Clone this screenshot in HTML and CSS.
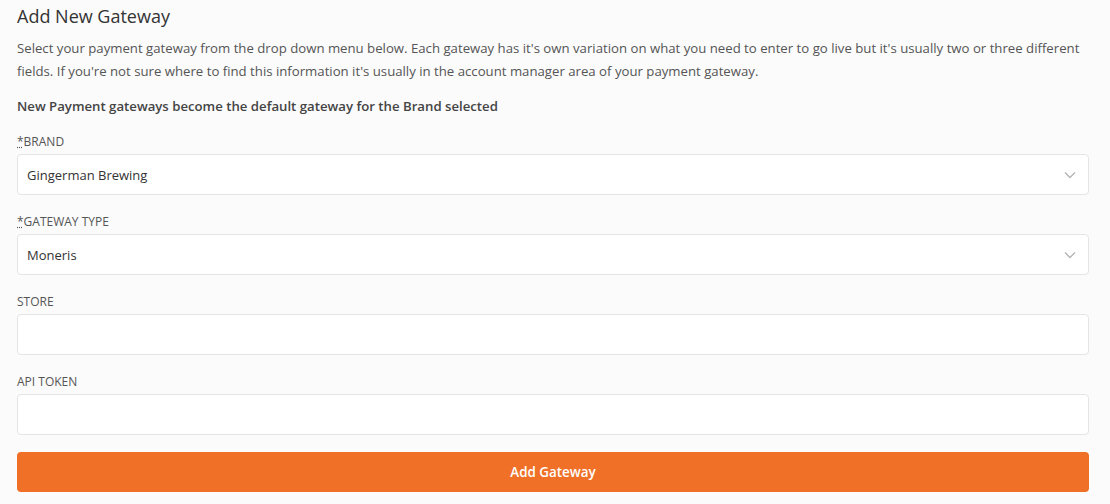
FILE: index.html
```html
<!DOCTYPE html>
<html lang="en">
<head>
    <meta charset="UTF-8">
    <meta name="viewport" content="width=device-width, initial-scale=1.0">
    <title>Add New Gateway</title>
    <link rel="stylesheet" href="styles.css">
</head>
<body>
    <div class="gateway-form">
        <h2 class="form-title">Add New Gateway</h2>
        <p class="form-intro">Select your payment gateway from the drop down menu below. Each gateway has it's own variation on what you need to enter to go live but it's usually two or three different fields. If you're not sure where to find this information it's usually in the account manager area of your payment gateway.</p>
        <p class="form-note">New Payment gateways become the default gateway for the Brand selected</p>

        <div class="field">
            <label class="field-label"><abbr title="required">*</abbr>BRAND</label>
            <div class="select-box">
                <span>Gingerman Brewing</span>
                <svg class="chevron" width="12" height="8" viewBox="0 0 12 8"><path d="M1 1.5l5 5 5-5" fill="none" stroke="#b5b5b5" stroke-width="1.4"/></svg>
            </div>
        </div>

        <div class="field">
            <label class="field-label"><abbr title="required">*</abbr>GATEWAY TYPE</label>
            <div class="select-box">
                <span>Moneris</span>
                <svg class="chevron" width="12" height="8" viewBox="0 0 12 8"><path d="M1 1.5l5 5 5-5" fill="none" stroke="#b5b5b5" stroke-width="1.4"/></svg>
            </div>
        </div>

        <div class="field">
            <label class="field-label">STORE</label>
            <input class="text-input" type="text">
        </div>

        <div class="field">
            <label class="field-label">API TOKEN</label>
            <input class="text-input" type="text">
        </div>

        <button class="submit-btn">Add Gateway</button>
    </div>
</body>
</html>
```

FILE: styles.css
```css
/* Page */
body {
    margin: 0;
    background-color: #fbfbfb;
    font-family: "Open Sans", "Noto Sans", sans-serif;
    color: #4a4a4a;
}

.gateway-form {
    padding: 4px 21px 0 17px;
}

.form-title {
    font-size: 18px;
    font-weight: 400;
    color: #333;
    margin: 0 0 9px;
    line-height: 24px;
}

.form-intro {
    font-size: 13.2px;
    line-height: 23px;
    margin: 0 0 12px;
    color: #555;
}

.form-note {
    font-size: 13.2px;
    font-weight: 600;
    line-height: 23px;
    margin: 0 0 16px;
    color: #444;
}

/* Fields */
.field {
    margin-bottom: 19px;
}

.field:last-of-type {
    margin-bottom: 17px;
}

.field-label {
    display: block;
    font-size: 12px;
    line-height: 16px;
    color: #555;
    margin-bottom: 4px;
}

.field-label abbr {
    text-decoration: underline dotted;
    cursor: help;
}

.select-box, .text-input {
    box-sizing: border-box;
    width: 100%;
    height: 41px;
    background-color: #fff;
    border: 1px solid #e4e4e4;
    border-radius: 4px;
}

.select-box {
    display: flex;
    align-items: center;
    justify-content: space-between;
    padding: 0 12px 0 9px;
    font-size: 13px;
    color: #333;
}

.text-input {
    display: block;
    outline: none;
}

/* Button */
.submit-btn {
    display: block;
    width: 100%;
    height: 40px;
    border: none;
    border-radius: 4px;
    background-color: #f07028;
    color: #fff;
    font-family: inherit;
    font-size: 13.4px;
    font-weight: 600;
    cursor: pointer;
}
```
